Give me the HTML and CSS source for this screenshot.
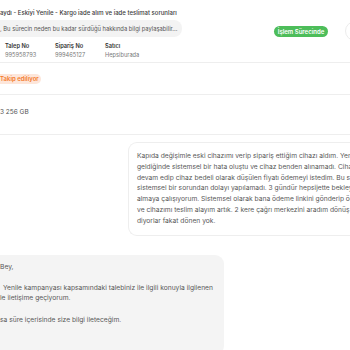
FILE: index.html
```html
<!DOCTYPE html>
<html lang="tr">
<head>
<meta charset="utf-8">
<link rel="stylesheet" href="styles.css">
</head>
<body>
<div class="page">
  <div class="header">
    <div class="hdr-main">
      <div class="title">aydı - Eskiyi Yenile - Kargo iade alım ve iade teslimat sorunları</div>
      <div class="note">, Bu sürecin neden bu kadar sürdüğü hakkında bilgi paylaşabilir...</div>
      <div class="meta">
        <div class="meta-col"><div class="meta-label">Talep No</div><div class="meta-value">995958793</div></div>
        <div class="meta-col"><div class="meta-label">Sipariş No</div><div class="meta-value">999465127</div></div>
        <div class="meta-col"><div class="meta-label">Satıcı</div><div class="meta-value">Hepsiburada</div></div>
      </div>
    </div>
    <div class="hdr-side">
      <span class="badge-green">İşlem Sürecinde</span>
      <span class="circle-btn"></span>
    </div>
  </div>
  <div class="row status-row"><span class="pill-orange">Takip ediliyor</span></div>
  <div class="row product-row">3 256 GB</div>
  <div class="chat">
    <div class="msg msg-right">
      <div class="ln">Kapıda değişimle eski cihazımı verip sipariş ettiğim cihazı aldım. Yeni cihaz</div>
      <div class="ln">geldiğinde sistemsel bir hata oluştu ve cihaz benden alınamadı. Cihazı kullanmaya</div>
      <div class="ln">devam edip cihaz bedeli olarak düşülen fiyatı ödemeyi istedim. Bu süreç de</div>
      <div class="ln">sistemsel bir sorundan dolayı yapılamadı. 3 gündür hepsijette bekleyerek ödeme</div>
      <div class="ln">almaya çalışıyorum. Sistemsel olarak bana ödeme linkini gönderip ödemeyi yapayım</div>
      <div class="ln">ve cihazımı teslim alayım artık. 2 kere çağrı merkezini aradım dönüş yapacağız</div>
      <div class="ln">diyorlar fakat dönen yok.</div>
    </div>
    <div class="msg msg-left">
      <div class="ln">Bey,</div>
      <div class="gap"></div>
      <div class="ln indent">Yenile kampanyası kapsamındaki talebiniz ile ilgili konuyla ilgilenen</div>
      <div class="ln">le iletişime geçiyorum.</div>
      <div class="gap"></div>
      <div class="ln">sa süre içerisinde size bilgi ileteceğim.</div>
    </div>
  </div>
</div>
</body>
</html>
```
FILE: styles.css
```css
html, body {
  margin: 0;
  padding: 0;
  overflow: hidden;
  background: #ffffff;
}
body {
  font-family: Inter, "Noto Sans", "Liberation Sans", sans-serif;
  font-size: 6.5px;
  color: #555;
}
.page {
  width: 365px;
}
.header {
  display: flex;
  align-items: center;
  border-bottom: 1px solid #eeeeee;
  height: 63px;
  box-sizing: border-box;
}
.hdr-main {
  flex: 1;
  display: flex;
  flex-direction: column;
  padding-top: 5px;
}
.title {
  color: #3a3a3a;
  font-weight: 500;
  font-size: 6px;
  line-height: 10px;
  white-space: nowrap;
}
.note {
  margin-top: 2px;
  width: 182px;
  height: 17px;
  line-height: 17px;
  background: #f3f3f3;
  border-radius: 0 8px 8px 0;
  color: #555;
  font-size: 5.8px;
  white-space: nowrap;
  overflow: hidden;
}
.meta {
  display: flex;
  margin-top: 4px;
  padding-left: 5px;
  font-size: 5.7px;
}
.meta-col {
  width: 50px;
}
.meta-label {
  color: #333;
  font-weight: 600;
  line-height: 9px;
}
.meta-value {
  color: #7a7a7a;
  line-height: 9px;
}
.hdr-side {
  display: flex;
  align-items: center;
  gap: 17px;
}
.badge-green {
  display: inline-block;
  width: 54px;
  height: 11px;
  line-height: 11px;
  text-align: center;
  background: #4dbd5a;
  color: #fff;
  font-weight: 600;
  font-size: 6px;
  border-radius: 6px;
}
.circle-btn {
  display: inline-block;
  width: 18px;
  height: 18px;
  border: 1px solid #ececec;
  border-radius: 50%;
}
.row {
  border-bottom: 1px solid #eeeeee;
}
.status-row {
  padding: 11px 0 10px;
  line-height: 0;
}
.pill-orange {
  display: inline-block;
  height: 10px;
  line-height: 10px;
  padding: 0 2px 0 0;
  background: #fde6da;
  color: #f47a2a;
  font-weight: 600;
  font-size: 6px;
  border-radius: 0 5px 5px 0;
}
.product-row {
  padding: 12px 0 16px;
  line-height: 11px;
  color: #555;
}
.chat {
  display: flex;
  flex-direction: column;
  padding-top: 7px;
  gap: 19px;
}
.msg {
  line-height: 10.8px;
  color: #585858;
  font-size: 6.7px;
  overflow: hidden;
}
.ln {
  white-space: nowrap;
}
.gap {
  height: 10.6px;
}
.msg-right {
  margin-left: 128px;
  border: 1px solid #eeeeee;
  border-radius: 9px 0 0 9px;
  border-right: none;
  padding: 8px 0 8px 8px;
}
.msg-left {
  width: 224px;
  background: #f4f4f4;
  border-radius: 0 9px 9px 0;
  padding: 7px 0 30px 0;
  line-height: 10.6px;
}
.indent {
  text-indent: 3px;
}
```
